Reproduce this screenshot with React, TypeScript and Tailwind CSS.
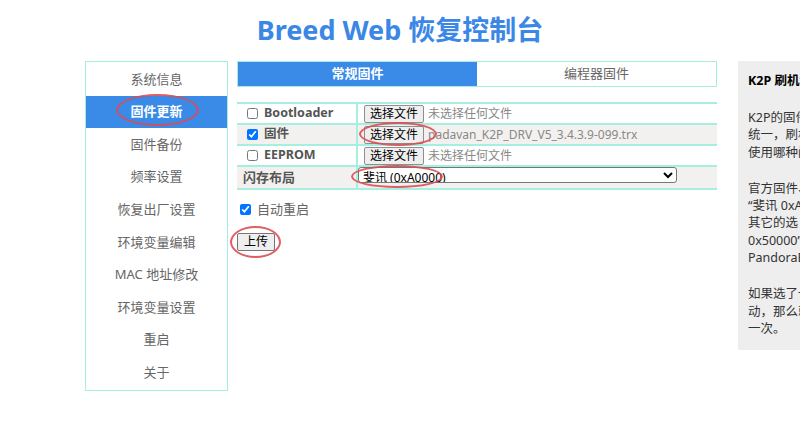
import { Fragment } from 'react';

const font = { fontFamily: '"Noto Sans", "Noto Sans CJK SC", sans-serif' };

const menu = [
  '系统信息',
  '固件更新',
  '固件备份',
  '频率设置',
  '恢复出厂设置',
  '环境变量编辑',
  'MAC 地址修改',
  '环境变量设置',
  '重启',
  '关于',
];

// fake native file picker button, so the label stays Chinese
const FileButton = () => (
  <span className="inline-flex items-center h-[18px] px-[5px] border border-[#8f8f8f] rounded-[2px] bg-[#efefef] text-[12px] text-black leading-none">
    选择文件
  </span>
);

const Ring = ({ cls }: { cls: string }) => (
  <div className={'absolute rounded-[50%] border-2 border-[#dc4b52]/90 pointer-events-none ' + cls} />
);

const rows = [
  { key: 'boot', label: 'Bootloader', check: false, file: '未选择任何文件', gray: false },
  { key: 'fw', label: '固件', check: true, file: 'padavan_K2P_DRV_V5_3.4.3.9-099.trx', gray: true },
  { key: 'eep', label: 'EEPROM', check: false, file: '未选择任何文件', gray: false },
];

const App = () => (
  <div className="relative w-screen h-[435px] overflow-hidden bg-white text-[13px]" style={font}>
    {
      //Header
    }
    <h1 className="h-[61px] flex items-center justify-center text-[27px] font-bold text-[#3a87e6]">
      Breed Web 恢复控制台
    </h1>

    <div className="flex items-start pl-[85px]">
      {
        //Sidebar
      }
      <ul className="w-[143px] shrink-0 border border-[#a6eee0] py-px">
        {menu.map((item) => (
          <li
            key={item}
            className={
              item === '固件更新'
                ? 'h-[32.6px] flex items-center justify-center bg-[#3a8be8] text-white font-bold'
                : 'h-[32.6px] flex items-center justify-center text-[#666]'
            }
          >
            {item}
          </li>
        ))}
      </ul>

      {
        //Main
      }
      <div className="w-[480px] shrink-0 ml-[9px]">
        <div className="flex h-[26px] border border-[#a6eee0]">
          <div className="w-1/2 flex items-center justify-center bg-[#3a8be8] text-white font-bold">常规固件</div>
          <div className="w-1/2 flex items-center justify-center text-[#666]">编程器固件</div>
        </div>

        <table className="mt-[15px] w-full border-collapse">
          <tbody>
            {rows.map((r) => (
              <tr key={r.key} className={'h-[21px] border-y-2 border-[#a6eee0] ' + (r.gray ? 'bg-[#f3f1f0]' : '')}>
                <td className="w-[120px] pl-[10px] border-r-2 border-[#a6eee0]">
                  <div className="flex items-center gap-[6px] text-[#555] font-bold text-[12.5px]">
                    <input type="checkbox" defaultChecked={r.check} className="w-[11px] h-[11px] m-0" />
                    {r.label}
                  </div>
                </td>
                <td className="pl-[6px]">
                  <div className="flex items-center gap-[4px] text-[12px] text-[#888]">
                    <FileButton />
                    {r.file}
                  </div>
                </td>
              </tr>
            ))}
            <tr className="h-[21px] border-y-2 border-[#a6eee0] bg-[#f3f1f0]">
              <td className="pl-[6px] border-r-2 border-[#a6eee0] text-[#555] font-bold">闪存布局</td>
              <td>
                <select
                  defaultValue="a0000"
                  className="w-[319px] h-[16px] text-[12px] leading-none border border-[#767676] rounded-[3px] bg-white text-black"
                  style={font}
                >
                  <option value="a0000">斐讯 (0xA0000)</option>
                </select>
              </td>
            </tr>
          </tbody>
        </table>

        <label className="mt-[10px] ml-[3px] flex items-center gap-[6px] text-[#666]">
          <input type="checkbox" defaultChecked className="w-[11px] h-[11px] m-0" />
          自动重启
        </label>

        <button className="mt-[14px] h-[18px] px-[6px] border border-[#767676] rounded-[2px] bg-[#efefef] text-[12px] text-black leading-none">
          上传
        </button>
      </div>

      {
        //Help panel
      }
      <div className="ml-[21px] w-[230px] shrink-0 h-[289px] bg-[#eeeeee] pl-[10px] pt-[11px] text-[12.5px] text-[#333] whitespace-nowrap">
        <p className="font-bold text-black leading-[17px]">K2P 刷机说明</p>
        <div className="mt-[20px] leading-[17.3px]">
          <Fragment>
            <p>K2P的固件闪存布局并不</p>
            <p>统一，刷机前请确认固件</p>
            <p>使用哪种闪存布局。</p>
          </Fragment>
          <p className="mt-[19px]">官方固件、老毛子固件请</p>
          <p>“斐讯 0xA0000”，</p>
          <p>其它的选 “通用</p>
          <p>0x50000”，如 LEDE、</p>
          <p>PandoraBox 等。</p>
          <p className="mt-[19px]">如果选了一个错误的布局</p>
          <p>动，那么就重新刷</p>
          <p>一次。</p>
        </div>
      </div>
    </div>

    {
      //Marks
    }
    <Ring cls="left-[116px] top-[94px] w-[83px] h-[32px]" />
    <Ring cls="left-[359px] top-[122px] w-[78px] h-[24px]" />
    <Ring cls="left-[351px] top-[165px] w-[92px] h-[23px]" />
    <Ring cls="left-[230px] top-[226px] w-[51px] h-[32px]" />
  </div>
);

export default App;
